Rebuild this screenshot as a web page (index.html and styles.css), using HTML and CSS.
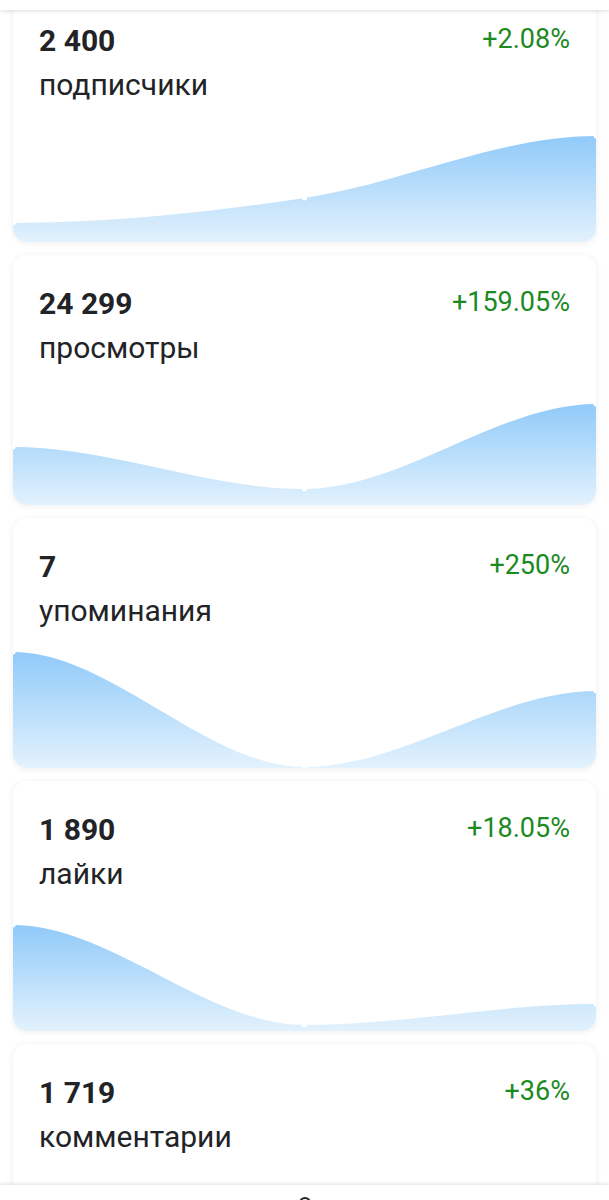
FILE: index.html
```html
<!DOCTYPE html>
<html lang="ru">
<head>
    <meta charset="UTF-8">
    <meta name="viewport" content="width=device-width, initial-scale=1.0">
    <link rel="stylesheet" href="styles.css">
    <title>Статистика</title>
</head>
<body>
    <div class="topbar"></div>

    <svg class="defs" width="0" height="0">
        <defs>
            <linearGradient id="area-fill" x1="0" y1="0" x2="0" y2="1">
                <stop offset="0" stop-color="#90caf9"/>
                <stop offset="1" stop-color="#e3f2fd"/>
            </linearGradient>
        </defs>
    </svg>

    <div class="feed">
        <div class="card">
            <div class="card-head">
                <span class="value">2 400</span>
                <span class="delta">+2.08%</span>
            </div>
            <div class="label">подписчики</div>
            <svg class="chart" viewBox="0 0 583 120" preserveAspectRatio="none">
                <path d="M0,101 C97.2,101 194.3,90.5 291.5,76 C388.7,61.5 485.8,14 583,14 L583,120 L0,120 Z" fill="url(#area-fill)"/>
                <circle cx="0" cy="101" r="2.5" class="dot"/>
                <circle cx="291.5" cy="76" r="2.5" class="dot"/>
                <circle cx="583" cy="14" r="2.5" class="dot"/>
            </svg>
        </div>

        <div class="card">
            <div class="card-head">
                <span class="value">24 299</span>
                <span class="delta">+159.05%</span>
            </div>
            <div class="label">просмотры</div>
            <svg class="chart" viewBox="0 0 583 120" preserveAspectRatio="none">
                <path d="M0,62 C97.2,62 194.3,104 291.5,104 C388.7,104 485.8,19 583,19 L583,120 L0,120 Z" fill="url(#area-fill)"/>
                <circle cx="0" cy="62" r="2.5" class="dot"/>
                <circle cx="291.5" cy="104" r="2.5" class="dot"/>
                <circle cx="583" cy="19" r="2.5" class="dot"/>
            </svg>
        </div>

        <div class="card">
            <div class="card-head">
                <span class="value">7</span>
                <span class="delta">+250%</span>
            </div>
            <div class="label">упоминания</div>
            <svg class="chart" viewBox="0 0 583 120" preserveAspectRatio="none">
                <path d="M0,4 C97.2,4 194.3,119 291.5,119 C388.7,119 485.8,43 583,43 L583,120 L0,120 Z" fill="url(#area-fill)"/>
                <circle cx="0" cy="4" r="2.5" class="dot"/>
                <circle cx="291.5" cy="119" r="2.5" class="dot"/>
                <circle cx="583" cy="43" r="2.5" class="dot"/>
            </svg>
        </div>

        <div class="card">
            <div class="card-head">
                <span class="value">1 890</span>
                <span class="delta">+18.05%</span>
            </div>
            <div class="label">лайки</div>
            <svg class="chart" viewBox="0 0 583 120" preserveAspectRatio="none">
                <path d="M0,14 C97.2,14 194.3,114 291.5,114 C388.7,114 485.8,93 583,93 L583,120 L0,120 Z" fill="url(#area-fill)"/>
                <circle cx="0" cy="14" r="2.5" class="dot"/>
                <circle cx="291.5" cy="114" r="2.5" class="dot"/>
                <circle cx="583" cy="93" r="2.5" class="dot"/>
            </svg>
        </div>

        <div class="card">
            <div class="card-head">
                <span class="value">1 719</span>
                <span class="delta">+36%</span>
            </div>
            <div class="label">комментарии</div>
        </div>
    </div>

    <div class="bottombar">
        <svg class="nav-icon" width="14" height="14" viewBox="0 0 14 14">
            <circle cx="7" cy="7" r="5" fill="none" stroke="#222" stroke-width="2.2"/>
        </svg>
    </div>
</body>
</html>
```

FILE: styles.css
```css
* {
  box-sizing: border-box;
  margin: 0;
  padding: 0;
}

body {
  font-family: Roboto, "Noto Sans", Arial, sans-serif;
  background: #fff;
  color: #202124;
  height: 1200px;
  overflow: hidden;
}

.defs {
  position: absolute;
}

.topbar {
  position: fixed;
  top: 0;
  left: 0;
  right: 0;
  height: 10px;
  background: #fff;
  box-shadow: 0 1px 4px rgba(0, 0, 0, 0.14);
  z-index: 2;
}

.feed {
  display: flex;
  flex-direction: column;
  gap: 13px;
  padding: 0 13px;
  margin-top: -8px;
}

.card {
  display: flex;
  flex-direction: column;
  height: 250px;
  background: #fff;
  border-radius: 14px;
  overflow: hidden;
  box-shadow: 0 1px 7px rgba(0, 0, 0, 0.07);
  padding-top: 31px;
}

.card-head {
  display: flex;
  justify-content: space-between;
  align-items: flex-start;
  padding: 0 26px;
}

.value {
  font-size: 30px;
  font-weight: 700;
  line-height: 36px;
  color: #222326;
}

.delta {
  font-size: 27px;
  line-height: 30px;
  margin-top: 1px;
  color: #1c8a1f;
}

.label {
  font-size: 30px;
  line-height: 36px;
  margin-top: 8px;
  padding: 0 26px;
  color: #222326;
}

.chart {
  display: block;
  width: 100%;
  height: 120px;
  margin-top: auto;
}

.dot {
  fill: #fff;
}

.bottombar {
  position: fixed;
  left: 0;
  right: 0;
  top: 1185px;
  height: 60px;
  background: #fff;
  box-shadow: 0 -1px 4px rgba(0, 0, 0, 0.12);
  display: flex;
  justify-content: center;
  z-index: 2;
}

.nav-icon {
  margin-top: 11px;
}
```
